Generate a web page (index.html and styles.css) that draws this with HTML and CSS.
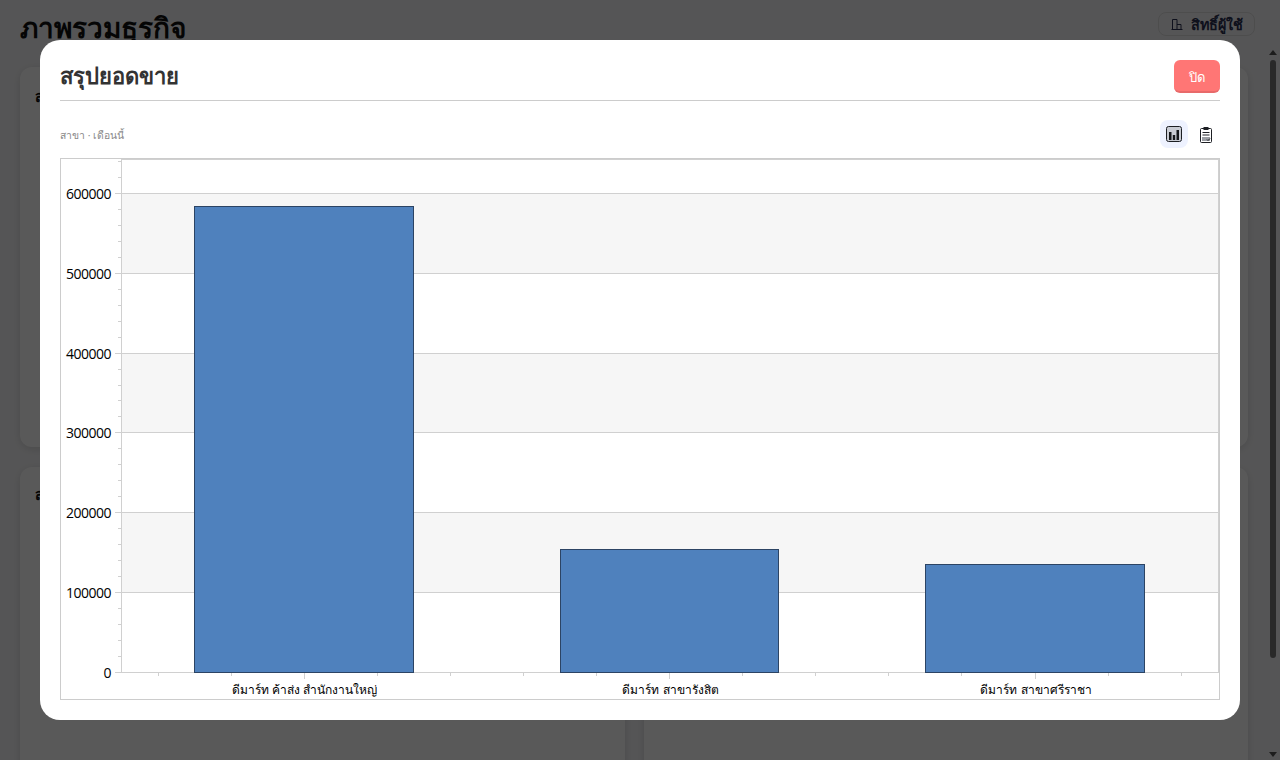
FILE: index.html
```html
<!DOCTYPE html>
<html lang="th">
<head>
  <meta charset="UTF-8">
  <title>ภาพรวมธุรกิจ</title>
  <link rel="stylesheet" href="styles.css">
</head>
<body>
  <div class="page">
    <header class="page-head">
      <h1>ภาพรวมธุรกิจ</h1>
      <button class="perm-btn">
        <svg class="perm-icon" viewBox="0 0 14 14" width="14" height="14" fill="none" stroke="currentColor" stroke-width="1">
          <path d="M1.500 12.500h11M2.500 12.500V2.500h4.500v10M7 7.500h4v5"/>
        </svg>
        สิทธิ์ผู้ใช้
      </button>
    </header>
    <div class="cards">
      <section class="card"><h3>สรุปยอดขาย</h3></section>
      <section class="card"><h3>สรุปยอดขาย</h3></section>
      <section class="card card-bottom"><h3>สรุปยอดขาย</h3></section>
      <section class="card card-bottom"><h3>สรุปยอดขาย</h3></section>
    </div>
  </div>
  <div class="scrollbar">
    <span class="arrow-up"></span>
    <span class="thumb"></span>
    <span class="arrow-down"></span>
  </div>

  <div class="overlay">
    <div class="modal">
      <div class="modal-head">
        <h2>สรุปยอดขาย</h2>
        <button class="close-btn">ปิด</button>
      </div>
      <div class="toolbar">
        <span class="subtitle">สาขา · เดือนนี้</span>
        <div class="view-btns">
          <button class="view-btn active">
            <svg viewBox="0 0 16 16" width="16" height="16">
              <rect x="0.500" y="0.500" width="15" height="15" rx="2" fill="#c9ccd4" stroke="#1d1f24"/>
              <path d="M3 14V6h2.500v8zM6.800 14V9h2.400v5zM10.500 14V4H13v10z" fill="#14161a"/>
            </svg>
          </button>
          <button class="view-btn">
            <svg viewBox="0 0 14 18" width="14" height="18" fill="none" stroke="#1d1f24">
              <rect x="1.500" y="3.500" width="11" height="14" rx="1"/>
              <rect x="4.500" y="2" width="5" height="3" fill="#1d1f24" stroke="none"/>
              <path d="M3.500 7.500h7M3.500 10h7"/>
              <rect x="3" y="12" width="8" height="4" fill="#9a9da3" stroke="none"/>
              <path d="M8 14.500l1 1 2-2" stroke="#1d1f24"/>
            </svg>
          </button>
        </div>
      </div>
      <div class="chart-box">
        <svg class="chart" viewBox="61 159 1158 540" width="1158" height="540" shape-rendering="crispEdges">
          <!-- bands -->
          <rect class="band" x="122" y="193" width="1096" height="80"/>
          <rect class="band" x="122" y="353" width="1096" height="80"/>
          <rect class="band" x="122" y="512" width="1096" height="80"/>
          <!-- grid -->
          <path class="grid" d="M121 193.500H1218M121 273.500H1218M121 353.500H1218M121 432.500H1218M121 512.500H1218M121 592.500H1218"/>
          <path class="grid" d="M121.500 160V672.500H1218.500V160M121 159.500H1219"/>
          <!-- ticks -->
          <path class="grid" d="M115 193.500h6M115 273.500h6M115 353.500h6M115 432.500h6M115 512.500h6M115 592.500h6M115 672.500h6"/>
          <path class="grid" d="M118 161.500h3M118 177.500h3M118 209.500h3M118 225.500h3M118 241.500h3M118 257.500h3M118 289.500h3M118 305.500h3M118 321.500h3M118 337.500h3M118 369.500h3M118 385.500h3M118 400.500h3M118 416.500h3M118 448.500h3M118 464.500h3M118 480.500h3M118 496.500h3M118 528.500h3M118 544.500h3M118 560.500h3M118 576.500h3M118 608.500h3M118 624.500h3M118 640.500h3M118 656.500h3"/>
          <path class="grid" d="M158.500 673v3M231.500 673v3M377.500 673v3M450.500 673v3M523.500 673v3M596.500 673v3M742.500 673v3M815.500 673v3M888.500 673v3M961.500 673v3M1108.500 673v3M1181.500 673v3"/>
          <path class="grid" d="M304.500 673v6M669.500 673v6M1035.500 673v6"/>
          <!-- bars -->
          <rect class="bar" x="194.500" y="206.500" width="219" height="466"/>
          <rect class="bar" x="560.500" y="549.500" width="218" height="123"/>
          <rect class="bar" x="925.500" y="564.500" width="219" height="108"/>
          <!-- labels -->
          <g class="y-label">
            <text x="111" y="199">600000</text>
            <text x="111" y="279">500000</text>
            <text x="111" y="359">400000</text>
            <text x="111" y="438">300000</text>
            <text x="111" y="518">200000</text>
            <text x="111" y="598">100000</text>
            <text x="111" y="678">0</text>
          </g>
          <g class="x-label">
            <text x="304.500" y="694">ดีมาร์ท ค้าส่ง สำนักงานใหญ่</text>
            <text x="670.500" y="694">ดีมาร์ท สาขารังสิต</text>
            <text x="1036" y="694">ดีมาร์ท สาขาศรีราชา</text>
          </g>
        </svg>
      </div>
    </div>
  </div>
</body>
</html>
```

FILE: styles.css
```css
html, body {
  height: 100%;
}
body {
  margin: 0;
  display: flex;
  height: 760px;
  overflow: hidden;
  font-family: 'Open Sans', 'Noto Sans', sans-serif;
  background: #f4f4f6;
  color: #111;
}
button {
  font-family: inherit;
}
.page {
  flex: 1;
  padding: 12px 10px 0 20px;
  overflow: hidden;
}
.page-head {
  display: flex;
  justify-content: space-between;
  align-items: flex-start;
  height: 55px;
}
.page-head h1 {
  margin: 0;
  font-size: 28px;
  line-height: 30px;
  font-weight: 700;
  color: #111;
}
.perm-btn {
  display: flex;
  align-items: center;
  gap: 7px;
  height: 24px;
  padding: 0 11px;
  background: #f4f4f6;
  border: 1px solid #ddd;
  border-radius: 8px;
  color: #2a3050;
  font-size: 14.4px;
  font-weight: 700;
}
.cards {
  display: grid;
  grid-template-columns: 605px 604px;
  grid-template-rows: 380px 380px;
  gap: 20px 19px;
}
.card {
  background: #fff;
  border-radius: 12px;
  box-shadow: 0 2px 8px rgba(0, 0, 0, .12);
  padding: 18px 15px;
}
.card-bottom {
  padding-top: 16px;
}
.card h3 {
  margin: 0;
  font-size: 15px;
  line-height: 22px;
  font-weight: 700;
}
.scrollbar {
  width: 15px;
  display: flex;
  flex-direction: column;
  align-items: center;
  background: #f4f4f6;
}
.thumb {
  width: 6px;
  height: 598px;
  margin-top: 5px;
  border-radius: 3px;
  background: #777;
}
.arrow-up, .arrow-down {
  width: 0;
  height: 0;
  border-left: 4px solid transparent;
  border-right: 4px solid transparent;
}
.arrow-up {
  margin-top: 50px;
  border-bottom: 5px solid #555;
}
.arrow-down {
  margin-top: 94px;
  border-top: 5px solid #555;
}
.overlay {
  position: fixed;
  inset: 0;
  padding: 40px;
  background: rgba(0, 0, 0, .65);
}
.modal {
  height: 640px;
  padding: 20px;
  background: #fff;
  border-radius: 20px;
  display: flex;
  flex-direction: column;
}
.modal-head {
  display: flex;
  justify-content: space-between;
  align-items: flex-start;
  height: 40px;
  border-bottom: 1px solid #ccc;
}
.modal-head h2 {
  margin: 0;
  font-size: 22px;
  line-height: 31px;
  font-weight: 700;
  color: #333;
}
.close-btn {
  width: 46px;
  height: 33px;
  padding: 3px 0 0;
  background: #ff7675;
  border: none;
  border-bottom: 2px solid #e86a6a;
  border-radius: 6px;
  color: #fff;
  font-size: 13px;
}
.toolbar {
  display: flex;
  justify-content: space-between;
  align-items: center;
  height: 28px;
  margin: 19px 0 10px;
}
.subtitle {
  padding-top: 2px;
  font-size: 10.3px;
  color: #888;
}
.view-btns {
  display: flex;
  gap: 4px;
}
.view-btn {
  display: flex;
  align-items: center;
  justify-content: center;
  width: 28px;
  height: 28px;
  padding: 0;
  background: none;
  border: none;
  border-radius: 8px;
}
.view-btn.active {
  background: #eef2ff;
}
.chart-box {
  width: 1158px;
  height: 540px;
  border: 1px solid #ccc;
}
.chart {
  display: block;
}
.band {
  fill: #f6f6f6;
}
.grid {
  fill: none;
  stroke: #d0d0d0;
  stroke-width: 1;
}
.bar {
  fill: #4f81bd;
  stroke: #2c4464;
  stroke-width: 1;
}
.y-label text {
  font-size: 14px;
  letter-spacing: -.5px;
  text-anchor: end;
  fill: #000;
}
.x-label text {
  font-size: 12px;
  text-anchor: middle;
  fill: #000;
}
```
